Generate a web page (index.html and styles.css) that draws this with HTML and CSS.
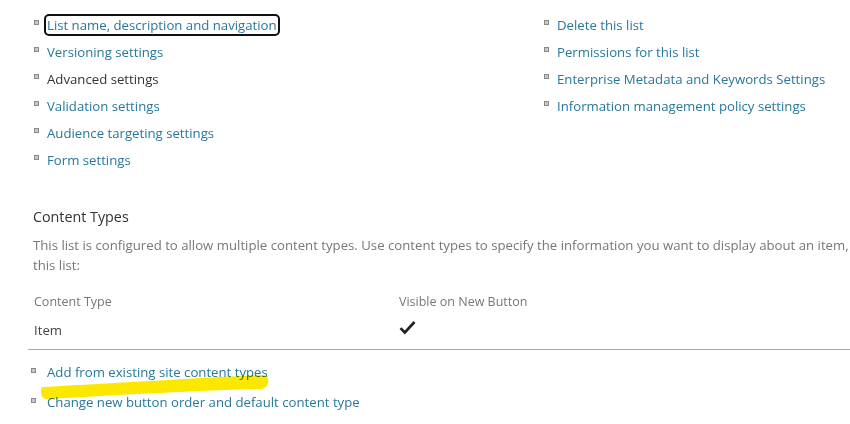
FILE: index.html
```html
<!DOCTYPE html>
<html>
<head>
<meta charset="utf-8">
<link rel="stylesheet" href="styles.css">
</head>
<body>
<div class="page">
  <div class="settings">
    <ul class="links">
      <li><span class="bullet"></span><a class="link focused">List name, description and navigation</a></li>
      <li><span class="bullet"></span><a class="link">Versioning settings</a></li>
      <li><span class="bullet"></span><a class="link dark">Advanced settings</a></li>
      <li><span class="bullet"></span><a class="link">Validation settings</a></li>
      <li><span class="bullet"></span><a class="link">Audience targeting settings</a></li>
      <li><span class="bullet"></span><a class="link">Form settings</a></li>
    </ul>
    <ul class="links right">
      <li><span class="bullet"></span><a class="link">Delete this list</a></li>
      <li><span class="bullet"></span><a class="link">Permissions for this list</a></li>
      <li><span class="bullet"></span><a class="link">Enterprise Metadata and Keywords Settings</a></li>
      <li><span class="bullet"></span><a class="link">Information management policy settings</a></li>
    </ul>
  </div>

  <section class="ctypes">
    <h2 class="title">Content Types</h2>
    <p class="desc">This list is configured to allow multiple content types. Use content types to specify the information you want to display about an item, in addition to its policies, workflows, or other behavior. The following content types are currently available in<br>this list:</p>
    <div class="table">
      <div class="row head">
        <div class="c1">Content Type</div>
        <div class="c2">Visible on New Button</div>
      </div>
      <div class="row body">
        <div class="c1 item">Item</div>
        <div class="c2"><svg class="check" width="17" height="15" viewBox="0 0 17 15"><path d="M1.5 8.2 L5.8 12.5 L15.5 2" fill="none" stroke="#222" stroke-width="2.6"/></svg></div>
      </div>
    </div>
    <ul class="links bottom">
      <li class="hl"><span class="bullet"></span><a class="link">Add from existing site content types</a>
        <svg class="marker" width="230" height="32" viewBox="0 0 230 32"><path d="M2 18 C60 15, 140 10, 221 6 C227 6, 228 10, 227 14 C226 18, 223 20, 218 20 C150 22, 80 26, 6 30 C1 30, 0 26, 0 23 C0 20, 0 18, 2 18 Z" fill="#fbe700"/></svg>
      </li>
      <li><span class="bullet"></span><a class="link">Change new button order and default content type</a></li>
    </ul>
  </section>
</div>
</body>
</html>
```

FILE: styles.css
```css
html, body {
  margin: 0;
  padding: 0;
  background: #fff;
  overflow: hidden;
}
body {
  font-family: "Open Sans", "Noto Sans", sans-serif;
  font-size: 13.2px;
  color: #444;
}
.page {
  width: 850px;
  height: 424px;
  overflow: hidden;
  padding: 11px 0 0 0;
  box-sizing: border-box;
}
.settings {
  display: flex;
}
.links {
  list-style: none;
  margin: 0;
  padding: 0 0 0 34px;
}
.links.right {
  padding-left: 0;
  margin-left: 200px;
}
.settings .links:first-child {
  width: 310px;
}
.links li {
  display: flex;
  align-items: center;
  height: 27px;
  position: relative;
}
.bullet {
  width: 5px;
  height: 5px;
  border: 1px solid #8a8a8a;
  background: #c8c8c8;
  box-sizing: border-box;
  margin-right: 8px;
  flex: none;
  position: relative;
  top: -2px;
}
.link {
  color: #27789c;
  text-decoration: none;
  white-space: nowrap;
  position: relative;
  z-index: 1;
}
.link.dark {
  color: #333;
}
.link.focused {
  outline: 2px solid #111;
  outline-offset: 0;
  border-radius: 3px;
  padding: 0 1px;
  margin-left: -1px;
}
.ctypes {
  margin-top: 34px;
  padding-left: 33px;
}
.title {
  margin: 0;
  font-size: 14.3px;
  font-weight: normal;
  color: #333;
  line-height: 20px;
}
.desc {
  margin: 8px 0 0 0;
  color: #777;
  line-height: 20px;
  white-space: nowrap;
}
.table {
  margin-top: 9px;
  margin-left: -5px;
  width: 822px;
  border-bottom: 1px solid #ababab;
}
.row {
  display: flex;
  align-items: center;
}
.row.head {
  color: #777;
  font-size: 12.5px;
  height: 34px;
}
.row.body {
  height: 31px;
  align-items: flex-start;
  padding-top: 3px;
  box-sizing: border-box;
}
.c1 {
  width: 365px;
  padding-left: 6px;
}
.item {
  color: #444;
}
.check {
  display: block;
  margin-top: -1px;
}
.links.bottom {
  padding-left: 0;
  margin-top: 7px;
  margin-left: -2px;
}
.links.bottom li {
  height: 30px;
}
.links.bottom .bullet {
  margin-right: 11px;
}
.marker {
  position: absolute;
  left: 10px;
  top: 12px;
  z-index: 2;
  mix-blend-mode: multiply;
}
```
